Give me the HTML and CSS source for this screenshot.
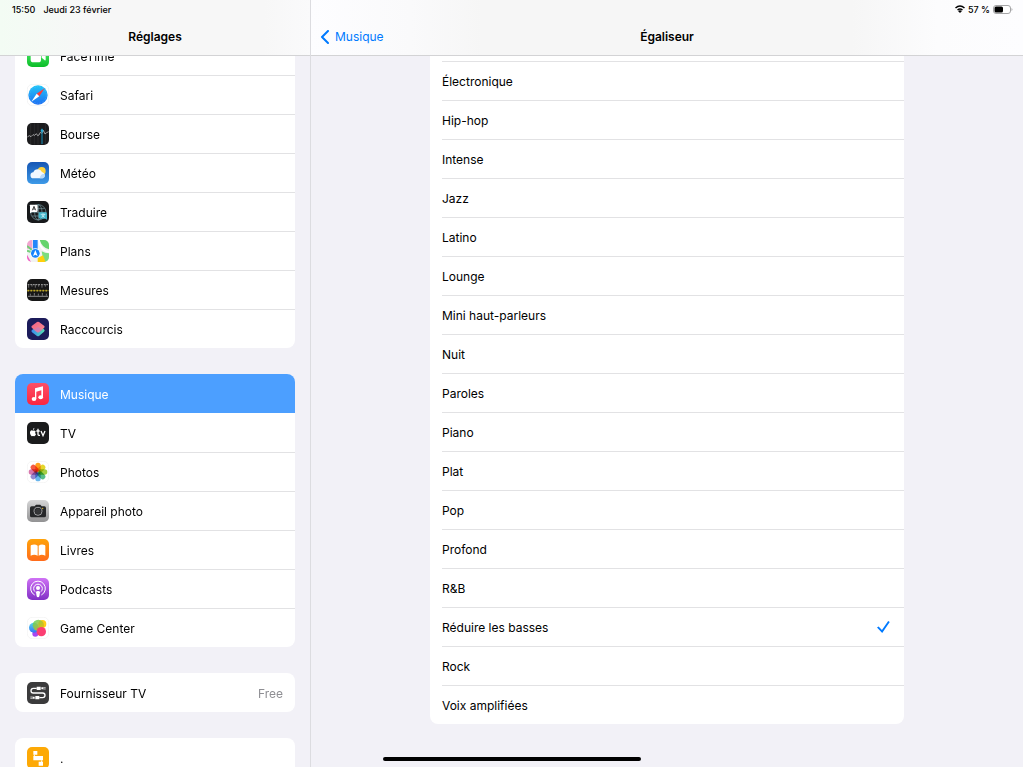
FILE: index.html
```html
<!DOCTYPE html>
<html lang="fr">
<head>
    <meta charset="UTF-8">
    <meta name="viewport" content="width=device-width, initial-scale=1.0">
    <title>Réglages</title>
    <link rel="stylesheet" href="styles.css">
</head>
<body>
    <!-- Sidebar -->
    <aside class="sidebar">
        <header class="bar bar-left">
            <div class="status">
                <span>15:50</span>
                <span>Jeudi 23 février</span>
            </div>
            <h1 class="bar-title">Réglages</h1>
        </header>
        <nav class="menu">
            <div class="group">
                <a class="row" href="#facetime">
                    <svg class="icon" viewBox="0 0 66 66"><defs><linearGradient id="g-ft" x2="0" y2="1"><stop stop-color="#5df777"/><stop offset="1" stop-color="#0abc28"/></linearGradient></defs><rect width="66" height="66" rx="15" fill="url(#g-ft)"/><rect x="11" y="18" width="31" height="34" rx="8" fill="#fff"/><path d="M44 30l9-8q3-1 3 2v20q0 3-3 2l-9-8z" fill="#fff"/></svg>
                    <span class="label">FaceTime</span>
                </a>
                <a class="row" href="#safari">
                    <svg class="icon" viewBox="0 0 66 66"><defs><linearGradient id="g-sa" x2="0" y2="1"><stop stop-color="#21c5f8"/><stop offset="1" stop-color="#1d6ff2"/></linearGradient></defs><rect x="1" y="1" width="64" height="64" rx="15" fill="#fff" stroke="#eee" stroke-width="2"/><circle cx="33" cy="33" r="29" fill="url(#g-sa)"/><circle cx="33" cy="33" r="25" fill="none" stroke="#8fd3fb" stroke-width="2" stroke-dasharray="1 4"/><path d="M53 13L29 29l8 8z" fill="#ff3b3b"/><path d="M13 53l16-24 8 8z" fill="#fff"/></svg>
                    <span class="label">Safari</span>
                </a>
                <a class="row" href="#bourse">
                    <svg class="icon" viewBox="0 0 66 66"><rect width="66" height="66" rx="15" fill="#1b1b1d"/><path d="M11 3v60M22 1v64M33 1v64M55 3v60" stroke="#303033" stroke-width="2"/><path d="M1 42l6-4 5 3 6-6 5 2 5-5 4 6 4-2 4-8 5 3 4-9 5 11 5-4 6-3" fill="none" stroke="#d8d8d8" stroke-width="2"/><path d="M45 17v46" stroke="#1592bd" stroke-width="3"/><circle cx="45" cy="23" r="4" fill="#2aa9d3"/></svg>
                    <span class="label">Bourse</span>
                </a>
                <a class="row" href="#meteo">
                    <svg class="icon" viewBox="0 0 66 66"><defs><linearGradient id="g-me" x2="0" y2="1"><stop stop-color="#1656b4"/><stop offset="1" stop-color="#3d9ae8"/></linearGradient></defs><rect width="66" height="66" rx="15" fill="url(#g-me)"/><circle cx="44" cy="27" r="12" fill="#ffd33c"/><path d="M20 49a9 9 0 0 1-1-18 14 14 0 0 1 26-1 10 10 0 0 1 2 19z" fill="#f1f7ff"/><path d="M38 49q2-14 14-14a10 10 0 0 1-4 14z" fill="#b9daf9"/></svg>
                    <span class="label">Météo</span>
                </a>
                <a class="row" href="#traduire">
                    <svg class="icon" viewBox="0 0 66 66"><rect width="66" height="66" rx="15" fill="#17191b"/><g fill="none" stroke="#7a9da5" stroke-width="2"><circle cx="34" cy="34" r="23"/><ellipse cx="34" cy="34" rx="11" ry="23"/><path d="M34 11v46M11 34h46M15 23h38M15 45h38"/></g><path d="M10 11h18q4 0 4 4v14q0 4-4 4H15l-6 4V15q-3-4 1-4z" fill="#fff"/><path d="M16 28l5-12 5 12M18 24h6" fill="none" stroke="#222" stroke-width="2.500"/><path d="M39 34h17q4 0 4 4v18l-5-3H39q-4 0-4-4V38q0-4 4-4z" fill="#42b5ca"/><path d="M41 40h14M48 37v3M43 49q8-2 9-9M45 42q2 5 8 7" fill="none" stroke="#e8fbff" stroke-width="2"/></svg>
                    <span class="label">Traduire</span>
                </a>
                <a class="row" href="#plans">
                    <svg class="icon" viewBox="0 0 66 66"><defs><clipPath id="c-pl"><rect width="66" height="66" rx="15"/></clipPath></defs><g clip-path="url(#c-pl)"><path fill="#f1f2f2" d="M0 0h66v66H0z"/><path d="M0 0h16v26H0z" fill="#f2a4cf"/><path d="M38 0h28v28Q44 22 38 0z" fill="#64d46d"/><path d="M44 34q10 6 22 6v26H50z" fill="#7bdc80"/><path d="M0 44l12 22H0z" fill="#f060c4"/><path d="M32 54l16-8 8 20H32z" fill="#ffcf0d"/><path d="M36 0q2 30 30 36" fill="none" stroke="#fff" stroke-width="5"/><path d="M18 0h14v40H18z" fill="#2486fa"/><path d="M0 18l18 14M0 32l12 4" stroke="#73cf78" stroke-width="6"/></g><circle cx="25" cy="40" r="15" fill="#fff"/><circle cx="25" cy="40" r="13" fill="#1684fc"/><path d="M25 30l7 18-7-4-7 4z" fill="#fff"/></svg>
                    <span class="label">Plans</span>
                </a>
                <a class="row" href="#mesures">
                    <svg class="icon" viewBox="0 0 66 66"><rect width="66" height="66" rx="15" fill="#171717"/><path d="M2 17h62" stroke="#aaa" stroke-width="3" stroke-dasharray="5 3"/><path d="M5 15v11M15 15v8M25 15v11M35 15v8M45 15v11M55 15v8" stroke="#999" stroke-width="2"/><path d="M0 35h66" stroke="#9d8a1f" stroke-width="2"/><path d="M2 35h62" stroke="#eed12e" stroke-width="5" stroke-dasharray="3 6"/><path d="M4 52h58" stroke="#aaa" stroke-width="4" stroke-dasharray="4 2"/><path d="M10 44v6M22 42v8M34 44v6M46 42v8M58 44v6" stroke="#aaa" stroke-width="2"/></svg>
                    <span class="label">Mesures</span>
                </a>
                <a class="row" href="#raccourcis">
                    <svg class="icon" viewBox="0 0 66 66"><defs><linearGradient id="g-r1" x2="1" y2="1"><stop stop-color="#f45b83"/><stop offset="1" stop-color="#f49492"/></linearGradient><linearGradient id="g-r2" x2="1" y2="0"><stop stop-color="#3989f1"/><stop offset="1" stop-color="#55dfb0"/></linearGradient></defs><rect width="66" height="66" rx="15" fill="#1c1b5a"/><path d="M33 22l18 12q4 4 0 7L36 54q-3 2-6 0L15 43q-4-4 0-7z" fill="url(#g-r2)"/><path d="M30 12q3-2 6 0l15 11q4 3 0 7L36 42q-3 2-6 0L15 30q-4-4 0-7z" fill="url(#g-r1)"/><path d="M33 27l13 9-10 7q-3 2-6 0l-10-8z" fill="#ca79ba" opacity=".7"/></svg>
                    <span class="label">Raccourcis</span>
                </a>
            </div>

            <div class="group">
                <a class="row selected" href="#musique">
                    <svg class="icon" viewBox="0 0 66 66"><defs><linearGradient id="g-mu" x2="0" y2="1"><stop stop-color="#fc5067"/><stop offset="1" stop-color="#fa2640"/></linearGradient></defs><rect width="66" height="66" rx="15" fill="url(#g-mu)"/><path d="M24 16l24-6v33h-5V22l-15 4v22h-4z" fill="#fff"/><ellipse cx="21" cy="48" rx="7" ry="6" fill="#fff"/><ellipse cx="41" cy="43" rx="7" ry="6" fill="#fff"/></svg>
                    <span class="label">Musique</span>
                </a>
                <a class="row" href="#tv">
                    <svg class="icon" viewBox="0 0 66 66"><rect width="66" height="66" rx="15" fill="#1a1b1c"/><path d="M18 26q-4-2-7 0-3 3-2 8 2 8 5 9 2-1 4-1t4 1q3-1 5-6-5-3-1-9-4-4-8-2zm0-2q-1-5 4-7 1 5-4 7z" fill="#fff"/><path d="M33 20v17q0 4 6 3M28 27h10M42 27l6 14 6-14" fill="none" stroke="#fff" stroke-width="4"/></svg>
                    <span class="label">TV</span>
                </a>
                <a class="row" href="#photos">
                    <svg class="icon" viewBox="0 0 66 66"><rect x="1" y="1" width="64" height="64" rx="15" fill="#fff" stroke="#f0f0f0" stroke-width="2"/><g class="petals"><rect x="25" y="5" width="16" height="27" rx="8" fill="#ff9e1b"/><rect x="25" y="5" width="16" height="27" rx="8" fill="#e5d52a" transform="rotate(45 33 33)"/><rect x="25" y="5" width="16" height="27" rx="8" fill="#a4ce43" transform="rotate(90 33 33)"/><rect x="25" y="5" width="16" height="27" rx="8" fill="#57bd89" transform="rotate(135 33 33)"/><rect x="25" y="5" width="16" height="27" rx="8" fill="#69b5ec" transform="rotate(180 33 33)"/><rect x="25" y="5" width="16" height="27" rx="8" fill="#958ad0" transform="rotate(225 33 33)"/><rect x="25" y="5" width="16" height="27" rx="8" fill="#d879ae" transform="rotate(270 33 33)"/><rect x="25" y="5" width="16" height="27" rx="8" fill="#f45a43" transform="rotate(315 33 33)"/></g></svg>
                    <span class="label">Photos</span>
                </a>
                <a class="row" href="#appareil-photo">
                    <svg class="icon" viewBox="0 0 66 66"><defs><linearGradient id="g-ca" x2="0" y2="1"><stop stop-color="#d6d6d7"/><stop offset="1" stop-color="#929293"/></linearGradient></defs><rect width="66" height="66" rx="15" fill="url(#g-ca)"/><path d="M14 19h9l4-5h13l4 5h8q5 0 5 5v23q0 5-5 5H14q-5 0-5-5V24q0-5 5-5z" fill="#262729"/><circle cx="33" cy="34" r="12" fill="none" stroke="#b6b6b8" stroke-width="2.500"/><circle cx="33" cy="34" r="8" fill="#353638"/><circle cx="47" cy="25" r="2" fill="#f5cb28"/></svg>
                    <span class="label">Appareil photo</span>
                </a>
                <a class="row" href="#livres">
                    <svg class="icon" viewBox="0 0 66 66"><defs><linearGradient id="g-li" x2="0" y2="1"><stop stop-color="#ffa30a"/><stop offset="1" stop-color="#ff6b1c"/></linearGradient></defs><rect width="66" height="66" rx="15" fill="url(#g-li)"/><path d="M32 20v30q-10-6-21 0V21q0-2 2-3 11-4 19 2zM35 20v30q9-6 20 0V21q0-2-2-3-10-4-18 2z" fill="#fff"/></svg>
                    <span class="label">Livres</span>
                </a>
                <a class="row" href="#podcasts">
                    <svg class="icon" viewBox="0 0 66 66"><defs><linearGradient id="g-po" x2="0" y2="1"><stop stop-color="#cf72f5"/><stop offset="1" stop-color="#8130c5"/></linearGradient></defs><rect width="66" height="66" rx="15" fill="url(#g-po)"/><g fill="none" stroke="#fff" stroke-width="3"><path d="M23 51a22 22 0 1 1 20 0"/><path d="M24 41a13 13 0 1 1 18 0"/></g><circle cx="33" cy="30" r="6" fill="#fff"/><path d="M27 43q0-4 6-4t6 4l-2 12q-1 3-4 3t-4-3z" fill="#fff"/></svg>
                    <span class="label">Podcasts</span>
                </a>
                <a class="row" href="#game-center">
                    <svg class="icon" viewBox="0 0 66 66"><defs><linearGradient id="g-g1" x2="0" y2="1"><stop stop-color="#55d5ec"/><stop offset="1" stop-color="#3674f4"/></linearGradient><linearGradient id="g-g2" x2="1" y2="1"><stop stop-color="#4bd86a"/><stop offset="1" stop-color="#ffae00"/></linearGradient></defs><rect x="1" y="1" width="64" height="64" rx="15" fill="#fff" stroke="#f0f0f0" stroke-width="2"/><circle cx="25" cy="50" r="9" fill="#a747f1"/><circle cx="21" cy="32" r="15" fill="url(#g-g1)"/><circle cx="46" cy="21" r="12" fill="#ffcc16"/><circle cx="34" cy="25" r="17" fill="url(#g-g2)" opacity=".85"/><circle cx="43" cy="44" r="14" fill="#fb3e72"/></svg>
                    <span class="label">Game Center</span>
                </a>
            </div>

            <div class="group">
                <a class="row" href="#fournisseur-tv">
                    <svg class="icon" viewBox="0 0 66 66"><rect width="66" height="66" rx="15" fill="#3b3b3c"/><path d="M29 19H19q-7 0-7 7t7 7h28q7 0 7 7t-7 7H37" fill="none" stroke="#fff" stroke-width="4"/><path d="M29 14h12v10H29zM43 16h6v6h-6zM25 42h12v10H25zM17 44h6v6h-6z" fill="#fff"/><path d="M49 17h7M49 21h7M10 45h7M10 49h7" stroke="#fff" stroke-width="2"/></svg>
                    <span class="label">Fournisseur TV <span class="value">Free</span></span>
                </a>
            </div>

            <div class="group">
                <a class="row" href="#app">
                    <svg class="icon" viewBox="0 0 66 66"><rect width="66" height="66" rx="15" fill="#fda906"/><path d="M19 12h12v11H19zM19 27h29v13H19zM35 44h13v12H35z" fill="#fff"/><path d="M22 23v5M44 40v5" stroke="#fff" stroke-width="3"/></svg>
                    <span class="label">.</span>
                </a>
            </div>
        </nav>
    </aside>

    <!-- Equalizer presets -->
    <main class="detail">
        <header class="bar bar-right">
            <div class="status status-right">
                <svg class="wifi" viewBox="0 0 20 16"><g fill="none" stroke="#000" stroke-width="3"><path d="M1 6Q10-2 19 6"/><path d="M5 10q5-4 10 0"/></g><path d="M6 12q4-3 8 0l-4 4z"/></svg>
                <span>57 %</span>
                <svg class="battery" viewBox="0 0 40 18"><rect x="1" y="1" width="34" height="16" rx="5" fill="#fff" stroke="#a5a5a7" stroke-width="2"/><rect x="3" y="3" width="17" height="12" rx="3"/><path d="M37 6q4 3 0 6z" fill="#a5a5a7"/></svg>
            </div>
            <div class="bar-row">
                <a class="back" href="#musique">
                    <svg class="chevron" viewBox="0 0 9 14"><path d="M8 1L2 7l6 6" fill="none" stroke="#007aff" stroke-width="2" stroke-linecap="round" stroke-linejoin="round"/></svg>
                    Musique
                </a>
                <h2 class="bar-title">Égaliseur</h2>
            </div>
        </header>
        <form class="presets">
            <label class="preset">Électronique <input type="radio" name="eq"></label>
            <label class="preset">Hip-hop <input type="radio" name="eq"></label>
            <label class="preset">Intense <input type="radio" name="eq"></label>
            <label class="preset">Jazz <input type="radio" name="eq"></label>
            <label class="preset">Latino <input type="radio" name="eq"></label>
            <label class="preset">Lounge <input type="radio" name="eq"></label>
            <label class="preset">Mini haut-parleurs <input type="radio" name="eq"></label>
            <label class="preset">Nuit <input type="radio" name="eq"></label>
            <label class="preset">Paroles <input type="radio" name="eq"></label>
            <label class="preset">Piano <input type="radio" name="eq"></label>
            <label class="preset">Plat <input type="radio" name="eq"></label>
            <label class="preset">Pop <input type="radio" name="eq"></label>
            <label class="preset">Profond <input type="radio" name="eq"></label>
            <label class="preset">R&amp;B <input type="radio" name="eq"></label>
            <label class="preset">Réduire les basses <input type="radio" name="eq" checked></label>
            <label class="preset">Rock <input type="radio" name="eq"></label>
            <label class="preset">Voix amplifiées <input type="radio" name="eq"></label>
        </form>
    </main>
    <div class="home-indicator"></div>
</body>
</html>
```

FILE: styles.css
```css
* {
    box-sizing: border-box;
}
body {
    margin: 0;
    height: 100vh;
    display: flex;
    overflow: hidden;
    position: relative;
    font-family: Inter, "Liberation Sans", sans-serif;
    font-size: 12px;
    color: #000;
    background-color: #f2f1f7;
}
a {
    color: inherit;
    text-decoration: none;
}

/* Panes */
.sidebar {
    flex: 0 0 311px;
    display: flex;
    flex-direction: column;
    border-right: 1px solid #dcdce0;
}
.detail {
    flex: 1;
    display: flex;
    flex-direction: column;
}

/* Top bars */
.bar {
    flex: none;
    border-bottom: 1px solid #d3d3d5;
    position: relative;
    z-index: 1;
}
.bar-left {
    background: linear-gradient(90deg, #f3fcf4, #f7f7f7 28%, #f7f7f7 85%, #fafafb);
}
.bar-right {
    background: linear-gradient(90deg, #fdfdff, #fafafb 14%, #f6f6f6 24%, #f6f6f6 76%, #fcfcfd 88%, #fdfdff);
}
.status {
    display: flex;
    align-items: center;
    gap: 8px;
    height: 18px;
    padding: 0 12px;
    font-size: 9px;
    font-weight: 500;
}
.status-right {
    justify-content: flex-end;
    gap: 3px;
    padding-right: 10px;
}
.wifi {
    width: 10px;
    height: 8px;
}
.battery {
    width: 20px;
    height: 9px;
}
.bar-title {
    margin: 0;
    font-size: 12px;
    font-weight: 600;
    line-height: 37px;
    text-align: center;
}
.bar-row {
    display: grid;
    grid-template-columns: 1fr auto 1fr;
    align-items: center;
}
.back {
    display: flex;
    align-items: center;
    gap: 6px;
    padding-left: 9px;
    color: #007aff;
}
.chevron {
    width: 9px;
    height: 14px;
}

/* Settings list, scrolled part of a row under the bar */
.menu {
    flex: 1;
    min-height: 0;
    display: flex;
    flex-direction: column;
    gap: 26px;
    margin-top: -20px;
    padding: 0 15px;
}
.group {
    flex: none;
    overflow: hidden;
    border-radius: 8px;
    background-color: #fff;
}
.row {
    display: flex;
    align-items: center;
    gap: 11px;
    height: 39px;
    padding-left: 12px;
}
.icon {
    flex: none;
    width: 22px;
    height: 22px;
}
.label {
    flex: 1;
    display: flex;
    align-items: center;
    justify-content: space-between;
    align-self: stretch;
    padding-right: 12px;
    border-top: 1px solid transparent;
}
.row + .row .label {
    border-top-color: #e2e2e4;
}
.row.selected {
    background-color: #4c9fff;
    color: #fff;
}
.row.selected + .row .label {
    border-top-color: transparent;
}
.value {
    color: #8e8e93;
}
.petals rect {
    mix-blend-mode: multiply;
}

/* Presets */
.presets {
    width: calc(100% - 24px);
    max-width: 474px;
    margin: 0 auto;
    padding: 5px 0 0 12px;
    border-radius: 0 0 8px 8px;
    background-color: #fff;
}
.preset {
    display: flex;
    align-items: center;
    justify-content: space-between;
    height: 39px;
    padding-right: 14px;
    border-top: 1px solid #e2e2e4;
}
.preset input {
    appearance: none;
    width: 13px;
    height: 12px;
    margin: 0;
}
.preset input:checked {
    background-color: #007aff;
    clip-path: polygon(0 55%, 12% 45%, 38% 75%, 86% 0, 98% 8%, 40% 100%);
}

.home-indicator {
    position: absolute;
    bottom: 6px;
    left: 50%;
    width: 258px;
    height: 4px;
    margin-left: -129px;
    border-radius: 2px;
    background-color: #000;
    z-index: 2;
}
```
